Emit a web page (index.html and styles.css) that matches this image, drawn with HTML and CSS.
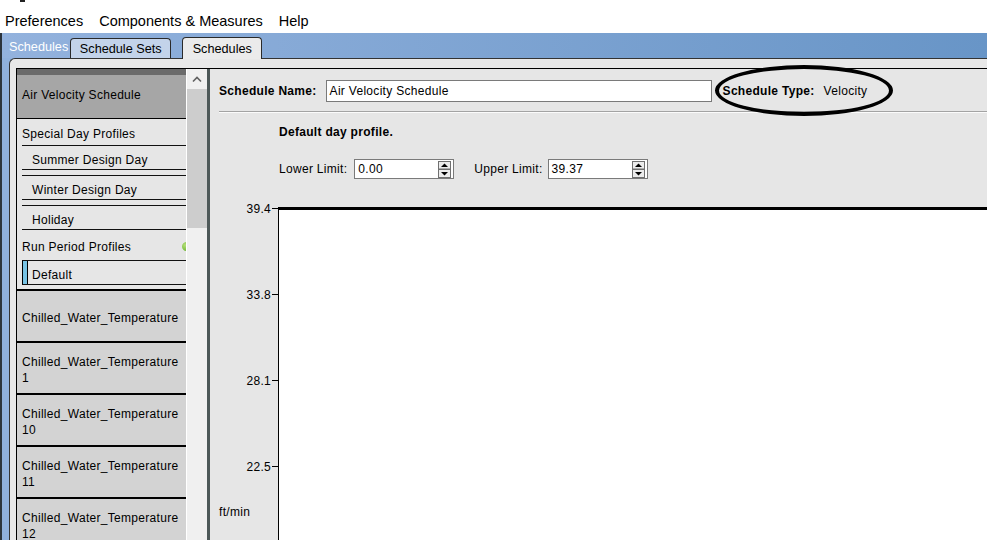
FILE: index.html
```html
<!doctype html>
<html lang="en">
	<head>
		<meta charset="UTF-8" />
		<title>Schedules</title>
		<link rel="stylesheet" href="styles.css">
	</head>
	<body>
		<div class="titlebar"><span class="mark"></span></div>
		<nav class="menubar">
			<a href="javascript:;">Preferences</a>
			<a href="javascript:;">Components &amp; Measures</a>
			<a href="javascript:;">Help</a>
		</nav>
		<section class="workspace">
			<div class="tabbar">
				<span class="tabbar-title">Schedules</span>
				<a href="javascript:;" class="tab">Schedule Sets</a>
				<a href="javascript:;" class="tab active">Schedules</a>
			</div>
			<div class="main">
				<div class="panel">
					<div class="inner">
						<div class="list">
							<div class="sched selected">Air Velocity Schedule</div>
							<div class="group">Special Day Profiles</div>
							<div class="day">Summer Design Day</div>
							<div class="day">Winter Design Day</div>
							<div class="day last">Holiday</div>
							<div class="group run">Run Period Profiles<span class="dot"></span></div>
							<div class="day current">Default</div>
							<div class="chw">Chilled_Water_Temperature</div>
							<div class="chw"><p>Chilled_Water_Temperature<br>1</p></div>
							<div class="chw"><p>Chilled_Water_Temperature<br>10</p></div>
							<div class="chw"><p>Chilled_Water_Temperature<br>11</p></div>
							<div class="chw"><p>Chilled_Water_Temperature<br>12</p></div>
						</div>
						<div class="scrollbar">
							<div class="sb-up">
								<svg width="10" height="7" viewBox="0 0 10 7"><polyline points="1,5.5 5,1.5 9,5.5" fill="none" stroke="#606060" stroke-width="1.6"/></svg>
							</div>
							<div class="sb-thumb"></div>
						</div>
						<div class="divider"></div>
						<div class="editor">
							<div class="header">
								<b>Schedule Name:</b>
								<div class="name-input">Air Velocity Schedule</div>
								<b class="type-label">Schedule Type:</b>
								<span class="type-value">Velocity</span>
								<span class="circle"></span>
							</div>
							<div class="rule"></div>
							<div class="profile-title">Default day profile.</div>
							<div class="limits">
								<span>Lower Limit:</span>
								<div class="spin">0.00
									<svg width="13" height="17" viewBox="0 0 13 17"><rect x="0.5" y="0.5" width="12" height="7.5" fill="#ececec" stroke="#707070"/><rect x="0.5" y="8.5" width="12" height="8" fill="#ececec" stroke="#707070"/><polygon points="3,6 6.5,2.5 10,6" fill="#000"/><polygon points="3,11 10,11 6.5,14.5" fill="#000"/></svg>
								</div>
								<span class="upper">Upper Limit:</span>
								<div class="spin">39.37
									<svg width="13" height="17" viewBox="0 0 13 17"><rect x="0.5" y="0.5" width="12" height="7.5" fill="#ececec" stroke="#707070"/><rect x="0.5" y="8.5" width="12" height="8" fill="#ececec" stroke="#707070"/><polygon points="3,6 6.5,2.5 10,6" fill="#000"/><polygon points="3,11 10,11 6.5,14.5" fill="#000"/></svg>
								</div>
							</div>
							<svg class="chart" width="777" height="345" viewBox="0 0 777 345">
								<rect x="69" y="12" width="708" height="333" fill="#fff"/>
								<line x1="68.5" y1="12" x2="68.5" y2="345" stroke="#000"/>
								<line x1="68" y1="13.5" x2="777" y2="13.5" stroke="#000" stroke-width="3"/>
								<g stroke="#000">
									<line x1="62" y1="13.5" x2="68" y2="13.5"/>
									<line x1="62" y1="99.5" x2="68" y2="99.5"/>
									<line x1="62" y1="185.5" x2="68" y2="185.5"/>
									<line x1="62" y1="271.5" x2="68" y2="271.5"/>
								</g>
								<g class="ticks" text-anchor="end">
									<text x="61" y="18">39.4</text>
									<text x="61" y="104">33.8</text>
									<text x="61" y="190">28.1</text>
									<text x="61" y="276">22.5</text>
								</g>
								<text class="unit" x="9" y="321">ft/min</text>
							</svg>
						</div>
					</div>
				</div>
			</div>
		</section>
	</body>
</html>
```

FILE: styles.css
```css
*{
	margin: 0;
	padding: 0;
	box-sizing: border-box;
}
body{
	width: 987px;
	height: 540px;
	overflow: hidden;
	background: #fff;
	font-family: "Liberation Sans", Arial, sans-serif;
	font-size: 12px;
	letter-spacing: 0.3px;
	color: #000;
}
a{
	color: #000;
	text-decoration: none;
}
.titlebar{
	height: 8px;
}
.titlebar .mark{
	display: block;
	width: 5px;
	height: 2px;
	margin-left: 20px;
	background: #222;
}
.menubar{
	height: 25px;
	display: flex;
	align-items: center;
	gap: 16px;
	padding-left: 5px;
	font-size: 14.5px;
	letter-spacing: 0;
}

.workspace{
	height: 507px;
	display: flex;
	flex-direction: column;
	border-left: 2px solid #2c343c;
}
.tabbar{
	height: 25px;
	display: flex;
	align-items: flex-end;
	padding-left: 7px;
	background: linear-gradient(to right, #93b2dd, #6895c7);
	font-size: 12.7px;
	letter-spacing: 0;
}
.tabbar-title{
	color: #fff;
	line-height: 15px;
	margin: 0 2px 3px 0;
}
.tab{
	width: 101px;
	height: 20px;
	line-height: 20px;
	text-align: center;
	background: #c3d3ea;
	border: 1px solid #2a2a2a;
	border-bottom: none;
	border-radius: 4px 4px 0 0;
}
.tab.active{
	width: 80px;
	height: 22px;
	line-height: 22px;
	margin: 0 0 -1px 11px;
	background: #ebebeb;
	position: relative;
	z-index: 1;
}

.main{
	flex: 1;
	display: flex;
	min-height: 0;
	padding-left: 7px;
	background: #8fb0dc;
}
.panel{
	flex: 1;
	display: flex;
	min-height: 0;
	padding: 9px 0 0 6px;
	background: #e8e8e8;
	border-top: 1px solid #333;
	border-left: 1px solid #333;
	border-top-left-radius: 6px;
}
.inner{
	flex: 1;
	display: flex;
	min-height: 0;
	border-top: 1px solid #000;
	border-left: 1px solid #000;
}

.list{
	width: 169px;
	overflow: hidden;
	background: #e6e6e6;
	white-space: nowrap;
}
.sched{
	height: 50px;
	display: flex;
	align-items: center;
	padding: 2px 0 0 5px;
	border-bottom: 1px solid #000;
}
.sched.selected{
	background: linear-gradient(#6b6b6b 0, #6b6b6b 6px, #a6a6a6 6px);
}
.group{
	height: 26px;
	display: flex;
	align-items: center;
	padding: 3px 0 0 5px;
}
.group.run{
	height: 30px;
}
.group .dot{
	width: 9px;
	height: 9px;
	margin: 0 -5px 0 auto;
	border-radius: 50%;
	background: radial-gradient(circle at 35% 35%, #b6e07a, #58a71f);
}
.day{
	height: 25px;
	margin: 0 0 5px 5px;
	padding: 4px 0 0 10px;
	display: flex;
	align-items: center;
	border-top: 1px solid #111;
	border-bottom: 1px solid #111;
}
.day.last{
	margin-bottom: 0;
}
.day.current{
	margin-bottom: 4px;
	padding-left: 9px;
	border-left: 1px solid #000;
	background: linear-gradient(to right, #78c3e4 0, #78c3e4 4px, #000 4px, #000 5px, transparent 5px);
}
.chw{
	height: 52px;
	display: flex;
	align-items: center;
	padding: 3px 0 0 5px;
	line-height: 16px;
	background: #d3d3d3;
	border-top: 2px solid #000;
}

.scrollbar{
	width: 21px;
	border-left: 1px solid #fff;
	background: #f0f0f0;
}
.sb-up{
	height: 20px;
	display: flex;
	align-items: center;
	justify-content: center;
}
.sb-up svg{
	display: block;
}
.sb-thumb{
	height: 139px;
	background: #cdcdcd;
}
.divider{
	width: 3px;
	background: #4d5858;
}

.editor{
	flex: 1;
	background: #e6e6e6;
}
.header{
	height: 42px;
	display: flex;
	align-items: center;
	padding: 1px 0 0 9px;
	position: relative;
}
.name-input{
	width: 386px;
	height: 22px;
	margin-left: 9px;
	padding-left: 3px;
	display: flex;
	align-items: center;
	background: #fff;
	border: 1px solid #7a7a7a;
}
.type-label{
	margin-left: 11px;
}
.type-value{
	margin-left: 9px;
}
.circle{
	position: absolute;
	left: 505px;
	top: -4px;
	width: 178px;
	height: 51px;
	border: 4px solid #000;
	border-radius: 50%;
}
.rule{
	margin-left: 9px;
	border-top: 1px solid #a3a3a3;
	border-bottom: 1px solid #fbfbfb;
}
.profile-title{
	padding: 11px 0 0 69px;
	line-height: 16px;
	font-weight: bold;
}
.limits{
	height: 20px;
	margin-top: 19px;
	padding-left: 69px;
	display: flex;
	align-items: center;
}
.spin{
	width: 100px;
	height: 20px;
	margin-left: 7px;
	padding: 0 2px 0 3px;
	display: flex;
	align-items: center;
	justify-content: space-between;
	background: #fff;
	border: 1px solid #7a7a7a;
}
.spin svg{
	display: block;
}
.limits .upper{
	margin-left: 20px;
}
.limits .upper + .spin{
	margin-left: 5px;
}
.chart{
	display: block;
	margin-top: 16px;
}
.chart text{
	font-family: "Liberation Sans", Arial, sans-serif;
	font-size: 12px;
	letter-spacing: 0.3px;
	fill: #000;
}
```
